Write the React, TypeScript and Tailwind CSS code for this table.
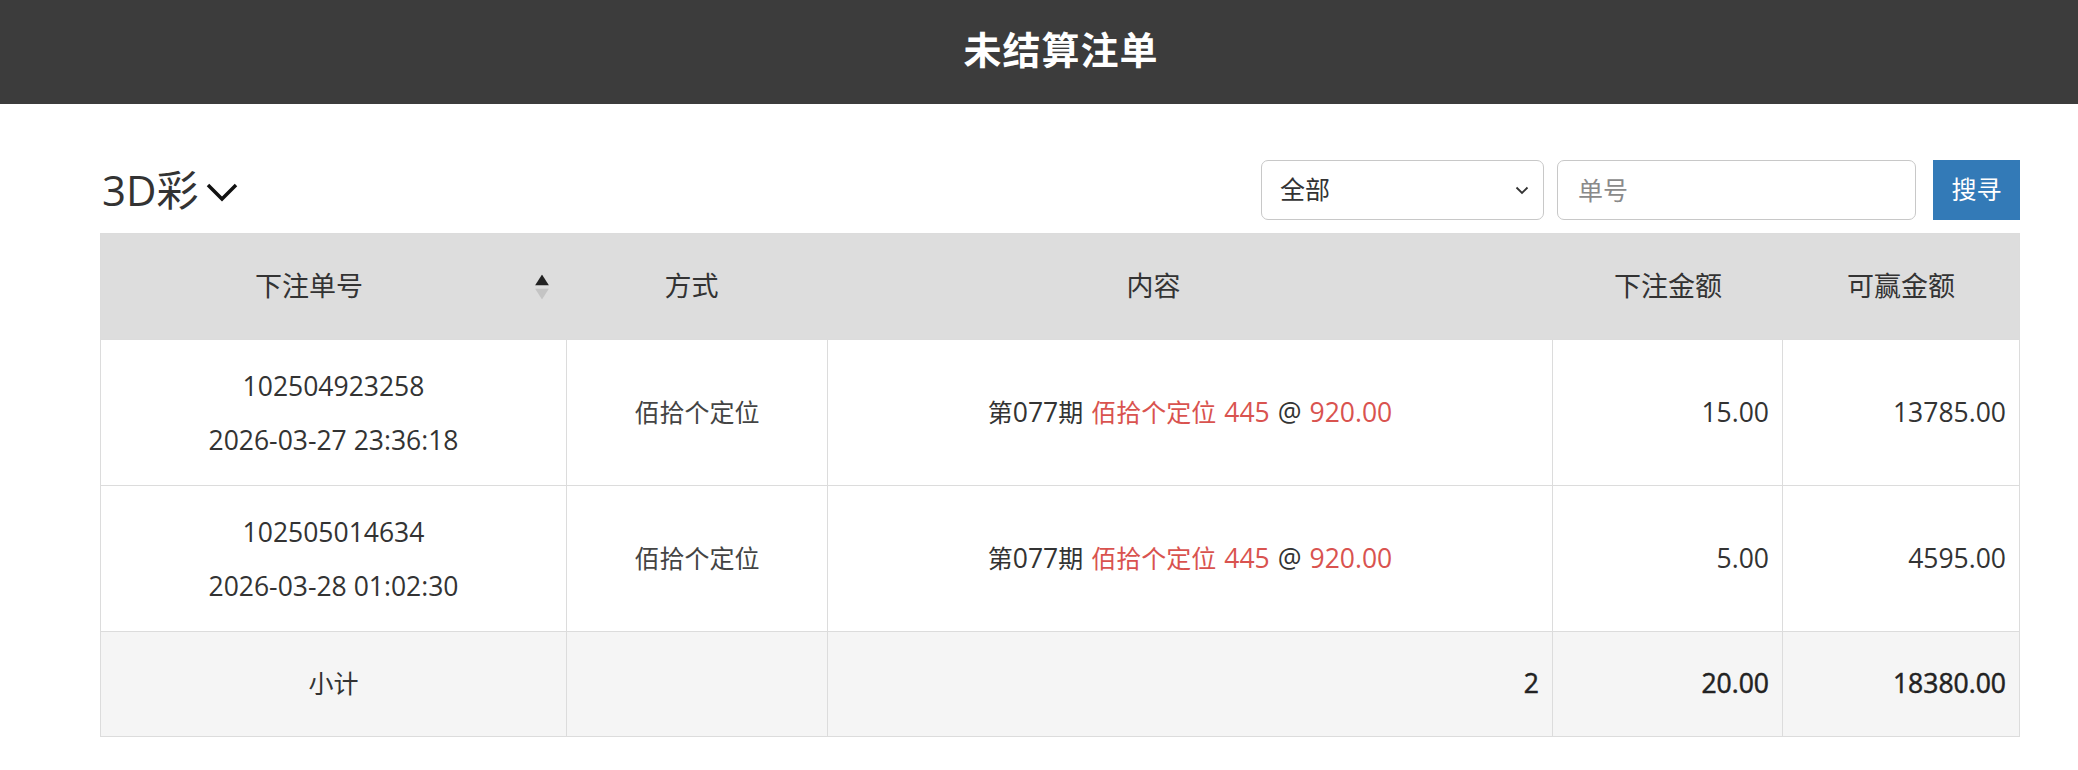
import React from 'react'

const rows = [
  { id: '102504923258', time: '2026-03-27 23:36:18', type: '佰拾个定位', issue: '077', num: '445', odds: '920.00', amount: '15.00', win: '13785.00' },
  { id: '102505014634', time: '2026-03-28 01:02:30', type: '佰拾个定位', issue: '077', num: '445', odds: '920.00', amount: '5.00', win: '4595.00' },
]

const cols = 'grid grid-cols-[466px_261px_725px_230px_236px]'

function SortIcon() {
  return (
    <div className="absolute right-[18px] top-1/2 -translate-y-1/2 flex flex-col items-center gap-[3px]">
      <svg width="14" height="11" viewBox="0 0 14 11"><path d="M7 0L14 11H0z" fill="#222" /></svg>
      <svg width="14" height="11" viewBox="0 0 14 11"><path d="M0 0H14L7 11z" fill="#c4c4c4" /></svg>
    </div>
  )
}

export default function App() {
  return (
    <div className="min-h-screen bg-white text-[#333] font-['Open_Sans','Noto_Sans_CJK_SC',sans-serif]">
      <div className="h-[104px] bg-[#3c3c3c] flex items-center justify-center pb-[6px] pl-[44px]">
        <h1 className="text-white text-[38px] font-bold tracking-[1px]">未结算注单</h1>
      </div>

      <div className="pl-[100px] pr-[58px]">
        <div className="mt-[56px] flex items-center h-[60px]">
          <div className="flex items-center gap-[6px] pl-[2px] text-[42px] leading-none text-[#333]">
            <span>3D彩</span>
            <svg width="34" height="22" viewBox="0 0 34 22" className="mt-[4px]">
              <path d="M3 4L17 18L31 4" fill="none" stroke="#111" strokeWidth="3.5" />
            </svg>
          </div>
          <div className="ml-auto flex items-center h-full">
            <div className="w-[283px] h-full border border-[#c8c8c8] rounded-[7px] flex items-center justify-between pl-[18px] pr-[14px] text-[25px]">
              <span>全部</span>
              <svg width="14" height="9" viewBox="0 0 14 9"><path d="M1.5 1.5L7 7L12.5 1.5" fill="none" stroke="#333" strokeWidth="1.8" /></svg>
            </div>
            <input
              placeholder="单号"
              className="ml-[13px] w-[359px] h-full border border-[#c8c8c8] rounded-[7px] px-[20px] text-[25px] placeholder:text-[#8a8a8a] outline-none"
            />
            <button className="ml-[17px] w-[87px] h-full bg-[#337ab7] text-white text-[25px]">搜寻</button>
          </div>
        </div>

        <div className="mt-[13px] w-[1920px] border border-[#dcdcdc] text-[25px]">
          <div className={`${cols} h-[105px] bg-[#dddddd] text-[27px] items-center`}>
            <div className="relative h-full flex items-center justify-center pr-[50px]">
              下注单号
              <SortIcon />
            </div>
            <div className="text-center pr-[12px]">方式</div>
            <div className="text-center pr-[74px]">内容</div>
            <div className="text-center">下注金额</div>
            <div className="text-center">可赢金额</div>
          </div>

          {rows.map((r) => (
            <div key={r.id} className={`${cols} h-[146px] border-t border-[#dcdcdc] bg-white`}>
              <div className="border-r border-[#dcdcdc] flex flex-col items-center justify-center leading-[54px] text-[26.5px]">
                <span>{r.id}</span>
                <span>{r.time}</span>
              </div>
              <div className="border-r border-[#dcdcdc] flex items-center justify-center text-[#444]">{r.type}</div>
              <div className="border-r border-[#dcdcdc] flex items-center justify-center gap-[8px]">
                <span>第<span className="text-[26.5px]">{r.issue}</span>期</span>
                <span className="text-[#d9534f]">{r.type}</span>
                <span className="text-[#d9534f] text-[26.5px]">{r.num}</span>
                <span className="text-[26.5px]">@</span>
                <span className="text-[#d9534f] text-[26.5px]">{r.odds}</span>
              </div>
              <div className="border-r border-[#dcdcdc] flex items-center justify-end pr-[13px] text-[26.5px]">{r.amount}</div>
              <div className="flex items-center justify-end pr-[13px] text-[26.5px]">{r.win}</div>
            </div>
          ))}

          <div className={`${cols} h-[105px] border-t border-[#dcdcdc] bg-[#f5f5f5] text-[26.5px]`}>
            <div className="border-r border-[#dcdcdc] flex items-center justify-center text-[25px]">小计</div>
            <div className="border-r border-[#dcdcdc]" />
            <div className="border-r border-[#dcdcdc] flex items-center justify-end pr-[13px] text-[#222] [-webkit-text-stroke:0.5px_#222]">2</div>
            <div className="border-r border-[#dcdcdc] flex items-center justify-end pr-[13px] text-[#222] [-webkit-text-stroke:0.5px_#222]">20.00</div>
            <div className="flex items-center justify-end pr-[13px] text-[#222] [-webkit-text-stroke:0.5px_#222]">18380.00</div>
          </div>
        </div>
      </div>
    </div>
  )
}
